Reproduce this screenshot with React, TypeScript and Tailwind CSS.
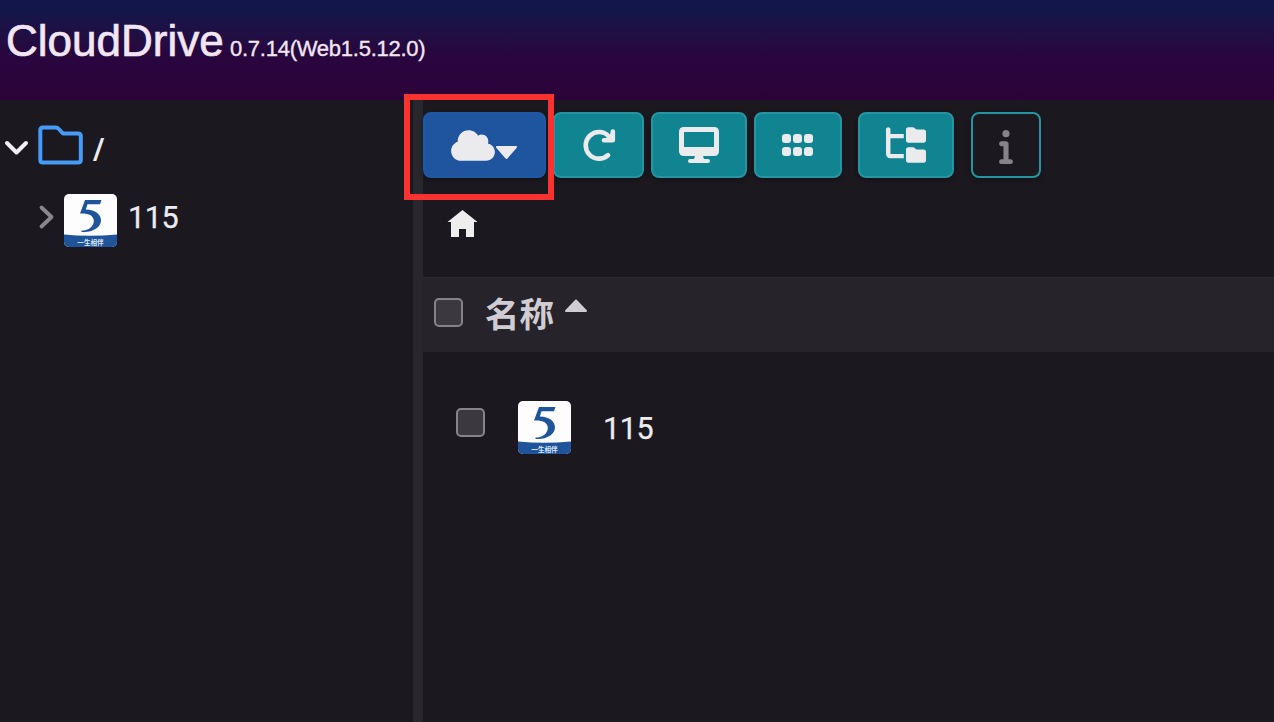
import type { ReactNode } from 'react';
import { FaCloud, FaFolderTree, FaInfo } from 'react-icons/fa6';

function DriveLogo() {
  return (
    <svg className="h-[53px] w-[53px] shrink-0" viewBox="0 0 53 53">
      <defs>
        <clipPath id="tile">
          <rect width="53" height="53" rx="5" />
        </clipPath>
      </defs>
      <g clipPath="url(#tile)">
        <rect width="53" height="53" fill="#fdfdfe" />
        <path d="M0 40.5Q26 43 53 40.5V53H0Z" fill="#1f549b" />
        <path
          d="M21 6H37.500L36 10.300H23.500L21.800 15.500C31.500 16 37 20.300 37 26.300C37 33.500 28 39 17.500 38V36.600C25 36.600 29.800 32 29.800 27C29.800 21.800 25 19.300 16 19.600Z"
          fill="#1f549b"
        />
      </g>
      <text
        x="26.500"
        y="50.500"
        textAnchor="middle"
        fontFamily="'Noto Sans CJK SC', sans-serif"
        fontSize="6.600"
        fontWeight="700"
        fill="#dce8f4"
      >
        一生相伴
      </text>
    </svg>
  );
}

function ToolButton({ className, children }: { className: string; children: ReactNode }) {
  return (
    <button
      className={`flex h-[66px] shrink-0 items-center justify-center rounded-lg border-2 text-[#ebebed] shadow-[0_2px_5px_rgba(0,0,0,0.3)] ${className}`}
    >
      {children}
    </button>
  );
}

function Checkbox() {
  return <span className="block size-[29px] shrink-0 rounded-[5px] border-2 border-[#85848a] bg-[#3b393f]" />;
}

export default function App() {
  return (
    <div className="relative flex h-[722px] w-[1274px] flex-col overflow-hidden bg-[#1b191f] font-['Liberation_Sans','Noto_Sans_CJK_SC',sans-serif] text-[#ececf0]">
      <header className="flex h-[100px] shrink-0 items-baseline bg-linear-to-b from-[#13164a] from-10% via-[#28063e] via-55% to-[#2c0339] pl-[6px] pt-[16px] text-[#f2e6f2]">
        <h1 className="w-[224px] text-[44px] leading-[50px] [-webkit-text-stroke:0.7px_currentColor]">CloudDrive</h1>
        <span className="text-[22px] tracking-[-0.25px] [-webkit-text-stroke:0.35px_currentColor]">0.7.14(Web1.5.12.0)</span>
      </header>

      <div className="flex min-h-0 grow">
        <aside className="flex w-[413px] shrink-0 flex-col pt-[22px]">
          <div className="flex h-[48px] items-center pl-[4px]">
            <svg className="mt-[4px] h-[16px] w-[25px]" viewBox="0 0 25 16" fill="none">
              <path d="M3 3L12.500 12.500L22 3" stroke="#f0f0f2" strokeWidth="4" strokeLinecap="round" strokeLinejoin="round" />
            </svg>
            <svg className="ml-[9px] mt-[-2px] h-[40px] w-[45px]" viewBox="0 0 45 40" fill="none">
              <path
                d="M5 2.500H17.500Q19.500 2.500 20.800 4L25 8.500H40Q42.800 8.500 42.800 11V35Q42.800 37.500 40 37.500H5Q2.300 37.500 2.300 35V5.500Q2.300 2.500 5 2.500Z"
                stroke="#459bf5"
                strokeWidth="4"
                strokeLinejoin="round"
              />
            </svg>
            <span className="ml-[11px] mt-[7px] inline-block scale-x-[1.250] text-[32px] leading-none">/</span>
          </div>
          <div className="mt-[24px] flex h-[53px] items-center pl-[38px]">
            <svg className="mt-[-7px] h-[26px] w-[17px]" viewBox="0 0 17 26" fill="none">
              <path d="M3.500 3.500L13.500 13L3.500 22.500" stroke="#88878b" strokeWidth="3.800" strokeLinecap="round" strokeLinejoin="round" />
            </svg>
            <div className="ml-[9px]">
              <DriveLogo />
            </div>
            <span className="ml-[11px] mt-[-4px] font-[Roboto,sans-serif] text-[30.500px] leading-none tracking-[-0.4px] [-webkit-text-stroke:0.25px_currentColor]">115</span>
          </div>
        </aside>

        <div className="w-[10px] shrink-0 bg-[#28272d]" />

        <main className="flex min-w-0 grow flex-col">
          <div className="flex h-[90px] shrink-0 pt-[12px]">
            <ToolButton className="w-[123px] border-[#2058a6] bg-[#1f559f]">
              <FaCloud className="h-[35px] w-[44px]" />
              <svg className="mt-[16px] h-[14px] w-[23px]" viewBox="0 0 23 14">
                <path d="M2 1H21L11.500 12Z" fill="currentColor" stroke="currentColor" strokeWidth="2" strokeLinejoin="round" />
              </svg>
            </ToolButton>
            <ToolButton className="ml-[7px] w-[91px] border-[#2495a1] bg-[#118491]">
              <svg className="h-[32px] w-[34px]" viewBox="0 0 34 32" fill="none">
                <path d="M26 26.200A13.300 13.300 0 1 1 26.500 7L29.500 10" stroke="currentColor" strokeWidth="4.600" strokeLinecap="round" />
                <path d="M30.800 2.500V11.200H22Z" fill="currentColor" />
                <path d="M30.800 2.500V11.200H22" stroke="currentColor" strokeWidth="4.600" strokeLinecap="round" strokeLinejoin="round" />
              </svg>
            </ToolButton>
            <ToolButton className="ml-[7px] w-[96px] border-[#2495a1] bg-[#118491]">
              <svg className="h-[36px] w-[40px]" viewBox="0 0 40 36" fill="currentColor">
                <path
                  fillRule="evenodd"
                  d="M5 0H35Q40 0 40 5V24Q40 29 35 29H24L25 32H29Q31 32 31 34T29 36H11Q9 36 9 34T11 32H15L16 29H5Q0 29 0 24V5Q0 0 5 0ZM5 5V20H35V5Z"
                />
              </svg>
            </ToolButton>
            <ToolButton className="ml-[7px] w-[88px] border-[#2495a1] bg-[#118491] pr-[1px]">
              <div className="grid grid-cols-3 gap-x-[2px] gap-y-[4px]">
                {[0, 1, 2, 3, 4, 5].map((n) => (
                  <span key={n} className="size-[9px] rounded-[3px] bg-[#ebebed]" />
                ))}
              </div>
            </ToolButton>
            <ToolButton className="ml-[16px] w-[96px] border-[#2495a1] bg-[#118491]">
              <FaFolderTree className="h-[36px] w-[40px]" />
            </ToolButton>
            <ToolButton className="ml-[17px] w-[70px] border-[#2495a1]">
              <FaInfo className="mt-[1px] h-[36px] w-[14px] text-[#858489]" stroke="currentColor" strokeWidth="8" />
            </ToolButton>
          </div>

          <nav className="h-[87px] shrink-0 pl-[24px] pt-[19px]">
            <svg className="h-[29px] w-[31px]" viewBox="0 0 31 29" fill="#eeeeef">
              <path d="M15.500 1L30.500 13H27V28H19V20H12V28H4V13H0.500Z" />
            </svg>
          </nav>

          <div className="flex h-[75px] shrink-0 border-t border-[#2c2a31] bg-[#26242a] pl-[11px]">
            <div className="mt-[20px]">
              <Checkbox />
            </div>
            <span className="ml-[22px] mt-[19px] w-[70px] text-[34.500px] font-bold leading-[36px] text-[#cfcdd3]">名称</span>
            <svg className="ml-[9px] mt-[20px] h-[15px] w-[24px]" viewBox="0 0 24 15">
              <path d="M2 13H22L12 2.500Z" fill="#cfcdd3" stroke="#cfcdd3" strokeWidth="2" strokeLinejoin="round" />
            </svg>
          </div>

          <div className="flex items-center pl-[33px] pt-[49px]">
            <div className="mt-[-11px]">
              <Checkbox />
            </div>
            <div className="ml-[33px]">
              <DriveLogo />
            </div>
            <span className="ml-[32px] mt-[4px] font-[Roboto,sans-serif] text-[30.500px] leading-none tracking-[-0.4px] [-webkit-text-stroke:0.25px_currentColor]">115</span>
          </div>
        </main>
      </div>

      <div className="pointer-events-none absolute left-[404px] top-[94px] h-[106px] w-[150px] border-[6px] border-[#fa3330]" />
    </div>
  );
}
